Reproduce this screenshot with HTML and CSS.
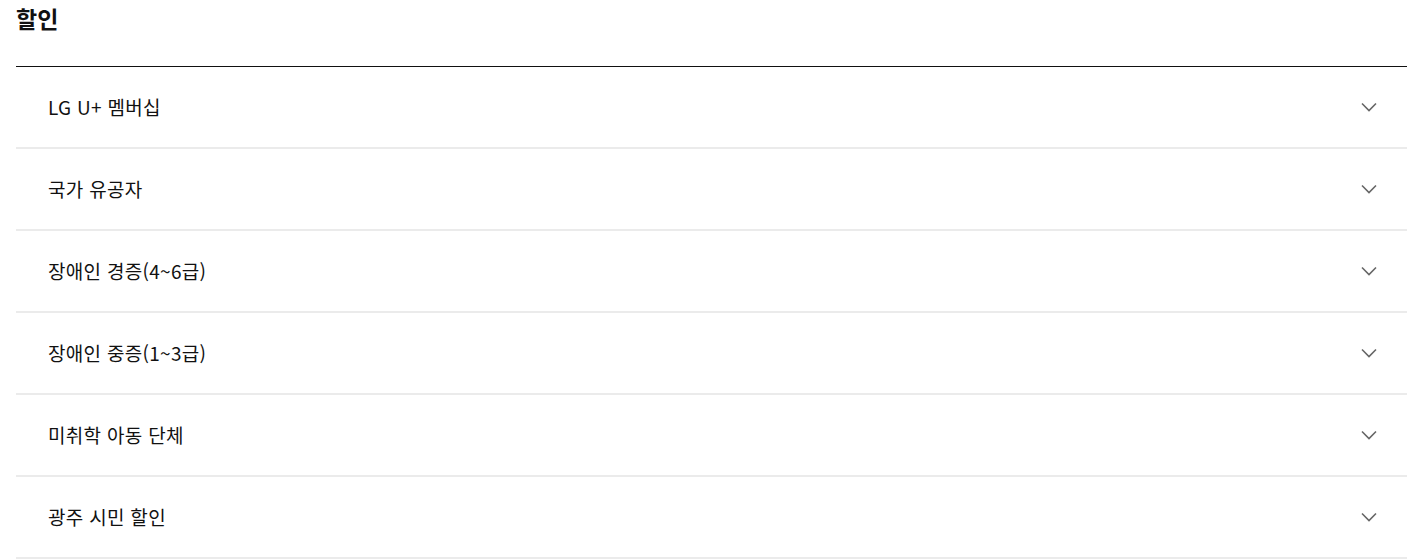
FILE: index.html
```html
<!DOCTYPE html>
<html lang="ko">
<head>
<meta charset="utf-8">
<meta name="viewport" content="width=device-width, initial-scale=1">
<title>할인</title>
<link rel="stylesheet" href="styles.css">
</head>
<body>
  <div class="discount">
    <h2 class="discount-title">할인</h2>
    <ul class="discount-list">
      <li class="discount-item">
        <span class="item-name">LG U+ 멤버십</span>
        <svg class="arrow" width="16" height="10" viewBox="0 0 16 10"><path d="M1 1.5 L8 8.5 L15 1.5"/></svg>
      </li>
      <li class="discount-item">
        <span class="item-name">국가 유공자</span>
        <svg class="arrow" width="16" height="10" viewBox="0 0 16 10"><path d="M1 1.5 L8 8.5 L15 1.5"/></svg>
      </li>
      <li class="discount-item">
        <span class="item-name">장애인 경증(4~6급)</span>
        <svg class="arrow" width="16" height="10" viewBox="0 0 16 10"><path d="M1 1.5 L8 8.5 L15 1.5"/></svg>
      </li>
      <li class="discount-item">
        <span class="item-name">장애인 중증(1~3급)</span>
        <svg class="arrow" width="16" height="10" viewBox="0 0 16 10"><path d="M1 1.5 L8 8.5 L15 1.5"/></svg>
      </li>
      <li class="discount-item">
        <span class="item-name">미취학 아동 단체</span>
        <svg class="arrow" width="16" height="10" viewBox="0 0 16 10"><path d="M1 1.5 L8 8.5 L15 1.5"/></svg>
      </li>
      <li class="discount-item">
        <span class="item-name">광주 시민 할인</span>
        <svg class="arrow" width="16" height="10" viewBox="0 0 16 10"><path d="M1 1.5 L8 8.5 L15 1.5"/></svg>
      </li>
    </ul>
  </div>
</body>
</html>
```

FILE: styles.css
```css
* {
  box-sizing: border-box;
}

body {
  margin: 0;
  background: #fff;
  color: #111;
  font-family: "Noto Sans CJK KR", "Noto Sans", sans-serif;
}

/* wrapper for the whole discount block */
.discount {
  padding: 0 6px 0 16px;
}

.discount-title {
  margin: 0;
  height: 67px;
  padding-top: 1px;
  font-size: 23px;
  line-height: 34px;
  font-weight: 700;
  border-bottom: 1px solid #111;
}

.discount-list {
  list-style: none;
  margin: 0;
  padding: 0;
}

.discount-item {
  display: flex;
  align-items: center;
  justify-content: space-between;
  height: 82px;
  padding: 0 30px 0 32px;
  border-bottom: 2px solid #ebebeb;
  cursor: pointer;
}

.item-name {
  font-size: 19px;
  line-height: 26px;
  letter-spacing: 0.3px;
  color: #111;
}

.arrow {
  display: block;
  fill: none;
  stroke: #666;
  stroke-width: 1.6;
}
```
